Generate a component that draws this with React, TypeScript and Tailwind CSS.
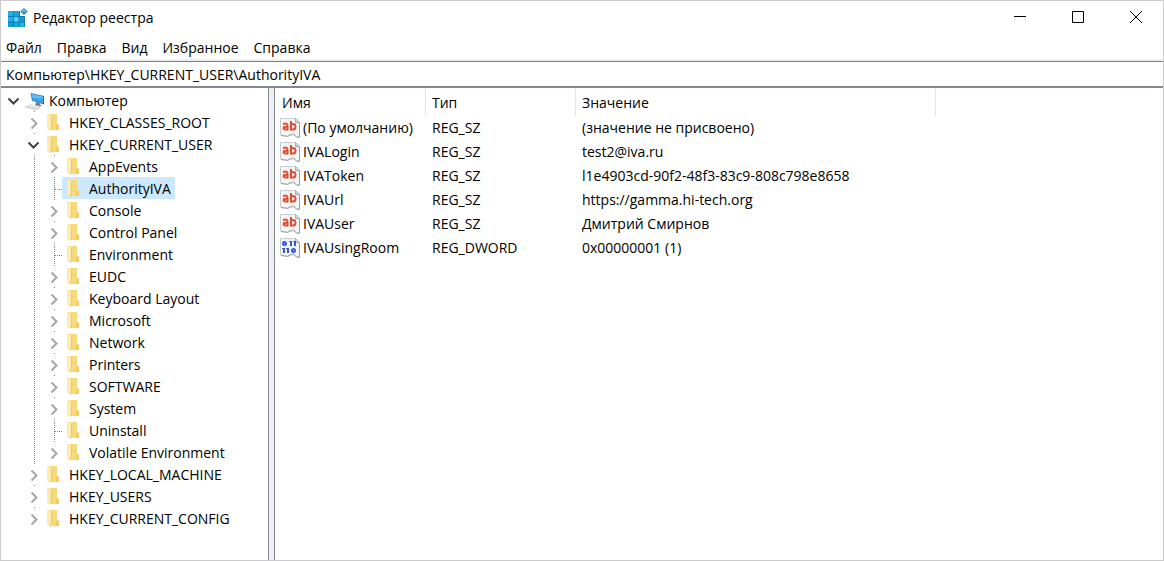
import React, { useState } from 'react';

interface TreeItem {
  name: string;
  level: number;
  state: 'open' | 'closed' | 'leaf';
}

const treeItems: TreeItem[] = [
  { name: 'Компьютер', level: 0, state: 'open' },
  { name: 'HKEY_CLASSES_ROOT', level: 1, state: 'closed' },
  { name: 'HKEY_CURRENT_USER', level: 1, state: 'open' },
  { name: 'AppEvents', level: 2, state: 'closed' },
  { name: 'AuthorityIVA', level: 2, state: 'leaf' },
  { name: 'Console', level: 2, state: 'closed' },
  { name: 'Control Panel', level: 2, state: 'closed' },
  { name: 'Environment', level: 2, state: 'leaf' },
  { name: 'EUDC', level: 2, state: 'closed' },
  { name: 'Keyboard Layout', level: 2, state: 'closed' },
  { name: 'Microsoft', level: 2, state: 'closed' },
  { name: 'Network', level: 2, state: 'closed' },
  { name: 'Printers', level: 2, state: 'closed' },
  { name: 'SOFTWARE', level: 2, state: 'closed' },
  { name: 'System', level: 2, state: 'closed' },
  { name: 'Uninstall', level: 2, state: 'leaf' },
  { name: 'Volatile Environment', level: 2, state: 'closed' },
  { name: 'HKEY_LOCAL_MACHINE', level: 1, state: 'closed' },
  { name: 'HKEY_USERS', level: 1, state: 'closed' },
  { name: 'HKEY_CURRENT_CONFIG', level: 1, state: 'closed' },
];

const values = [
  { name: '(По умолчанию)', type: 'REG_SZ', value: '(значение не присвоено)' },
  { name: 'IVALogin', type: 'REG_SZ', value: 'test2@iva.ru' },
  { name: 'IVAToken', type: 'REG_SZ', value: 'l1e4903cd-90f2-48f3-83c9-808c798e8658' },
  { name: 'IVAUrl', type: 'REG_SZ', value: 'https://gamma.hi-tech.org' },
  { name: 'IVAUser', type: 'REG_SZ', value: 'Дмитрий Смирнов' },
  { name: 'IVAUsingRoom', type: 'REG_DWORD', value: '0x00000001 (1)' },
];

const menuItems = ['Файл', 'Правка', 'Вид', 'Избранное', 'Справка'];

const AppIcon = () => (
  <svg className="h-5 w-5 shrink-0" viewBox="0 0 20 20" aria-hidden="true">
    <path d="M0 3h12l5 4v12H0z" fill="#0d7fb8" />
    <path d="M0 3h5v5H0zM0 9h5v4.500H0z" fill="#22b2ea" />
    <path d="M6 3h5v5H6zM6 14.500h4.500V19H6z" fill="#1ba4dd" />
    <path d="M6 9h4.500v4.500H6z" fill="#5fcdf5" />
    <path d="M0 14.500h5V19H0zM11.500 9H16v4.500h-4.500z" fill="#159bd3" />
    <path d="M11.500 14.500H16V19h-4.500z" fill="#22b2ea" />
    <path d="M12 2h8v6h-8z" fill="#fff" />
    <path d="M16 0l3.700 3.500L16 7l-3.700-3.500z" fill="#2f86b0" />
    <path d="M16 .8l2.700 2.500L16 4.600l-2.700-1.300z" fill="#62b7da" />
  </svg>
);

const ComputerIcon = () => (
  <svg className="h-5 w-5 shrink-0" viewBox="0 0 20 20" aria-hidden="true">
    <path d="M6.500 3L20 6v8.500L8 10.500z" fill="#2672ab" />
    <path d="M7.500 4L19 6.500v6.700L8.700 9.700z" fill="#3aa6f2" />
    <path d="M7.500 4L19 6.500v2L8 7.500z" fill="#63bdf8" />
    <path d="M12 12l4 1.300v1.500l2 .7-2 1-5-1.500z" fill="#76838b" />
    <path d="M1 16.500l5-2.500 10 3-4 2.200z" fill="#dfe3e6" />
    <path d="M1 16.500l11 2.700 4-2.200v.8L12 20 1 17.300z" fill="#aeb4b9" />
  </svg>
);

const FolderIcon = () => (
  <svg className="h-5 w-5 shrink-0" viewBox="0 0 20 20" aria-hidden="true">
    <path d="M4 2h9v10l2 1v5H5z" fill="#f8d979" />
    <path d="M13 12l2 1v5h-3v-5z" fill="#f2cc66" />
    <path d="M3 2h1l4 2v11l-2 3.500L3 17z" fill="#fdebb0" />
    <path d="M7.500 4v11l-1.500 3.500" fill="none" stroke="#eec968" />
  </svg>
);

const ValueIcon = ({ binary }: { binary: boolean }) => (
  <svg className="h-5 w-5 shrink-0" viewBox="0 0 20 20" aria-hidden="true">
    <path
      d="M.5.500h15l4 4v14.500l-3-.5-3-2.500-3 .5-3 1.500-3-.5L.500 17z"
      fill="#f4f5f6"
      stroke="#c9cccf"
    />
    <path d="M15.500.500v4h4z" fill="#d9dcde" stroke="#a9adb1" />
    <path d="M1 17.500l3.500.5 3 .5 3-1.500 3-.5 3 2.500 3 .5V5" fill="none" stroke="#9a9ea2" />
    {binary ? (
      <g fill="none" stroke="#3858dc" strokeWidth="2">
        <rect x="3" y="4" width="3" height="3" rx="1.500" />
        <path d="M11 3v5M15 3v5M4 10v5M8 10v5" />
        <rect x="12" y="11" width="3" height="3" rx="1.500" />
        <path d="M9 3.500h1M13 3.500h1M2 10.500h1M6 10.500h1" strokeWidth="1" />
      </g>
    ) : (
      <g fill="none" stroke="#dc5034" strokeWidth="2">
        <path d="M3 6q4.500-1.200 4.500 1.300V12.500M7.500 8.800H5.500q-2 0-2 1.300t2 1.400 2-1.400" />
        <path d="M11 3v9.500M11 8q0-2 2.200-2t2.300 2.700-2.300 2.800-2.200-2" />
      </g>
    )}
  </svg>
);

// Dotted guide line passing by a nested row
const Guide = () => (
  <svg className="h-[22px] w-5 shrink-0" viewBox="0 0 20 22" aria-hidden="true">
    <path d="M10.500 0v22" stroke="#808080" strokeDasharray="1 1" />
  </svg>
);

const Branch = ({ item }: { item: TreeItem }) => (
  <svg className="h-[22px] w-[18px] shrink-0" viewBox="0 0 18 22" aria-hidden="true">
    {item.state === 'leaf' && (
      <path d="M10.500 0v22M11 12.500h7" stroke="#808080" strokeDasharray="1 1" />
    )}
    {item.state !== 'leaf' && item.level > 0 && <path d="M10.500 0v1" stroke="#808080" />}
    {item.state === 'closed' && (
      <path d="M7.500 7.500l5 5-5 5" fill="none" stroke="#a6a6a6" strokeWidth="2" />
    )}
    {item.state === 'open' && (
      <path d="M4.500 9.500l5 5 5-5" fill="none" stroke="#404040" strokeWidth="2" />
    )}
  </svg>
);

interface TreeRowProps {
  item: TreeItem;
  selected: boolean;
  onSelect: () => void;
}

const TreeRow: React.FC<TreeRowProps> = ({ item, selected, onSelect }) => (
  <li className="flex h-[22px]">
    {item.level > 0 && <span className="w-5 shrink-0" />}
    {item.level > 1 && <Guide />}
    <Branch item={item} />
    <button
      type="button"
      onClick={onSelect}
      className={`flex items-center gap-[5px] whitespace-nowrap pl-0.5 pr-1 ${selected ? 'bg-[#cce8ff]' : ''}`}
    >
      {item.level === 0 ? <ComputerIcon /> : <FolderIcon />}
      <span className="pt-0.5">{item.name}</span>
    </button>
  </li>
);

const WindowControls = () => (
  <div className="flex gap-1">
    <button type="button" aria-label="Свернуть" className="flex h-8 w-[54px] items-center justify-center">
      <svg className="h-3 w-3" viewBox="0 0 12 12">
        <path d="M0 5.500h12" stroke="#000" />
      </svg>
    </button>
    <button type="button" aria-label="Развернуть" className="flex h-8 w-[54px] items-center justify-center">
      <svg className="h-3 w-3" viewBox="0 0 12 12">
        <path d="M.5.500h11v11H.500z" fill="none" stroke="#000" />
      </svg>
    </button>
    <button type="button" aria-label="Закрыть" className="flex h-8 w-[54px] items-center justify-center">
      <svg className="h-3 w-3" viewBox="0 0 12 12">
        <path d="M0 0l12 12M12 0L0 12" stroke="#000" />
      </svg>
    </button>
  </div>
);

const App = () => {
  const [selected, setSelected] = useState('AuthorityIVA');
  const [address, setAddress] = useState('Компьютер\\HKEY_CURRENT_USER\\AuthorityIVA');

  return (
    <div className="flex min-h-screen flex-col border border-[#cccccc] bg-white font-['Open_Sans','Noto_Sans',sans-serif] text-sm leading-5 text-black">
      <header className="flex h-9 items-start justify-between">
        <div className="flex h-[34px] items-center gap-[5px] pl-[7px]">
          <AppIcon />
          <h1>Редактор реестра</h1>
        </div>
        <WindowControls />
      </header>

      <nav className="flex h-6 items-center gap-[15px] border-b-2 border-[#f0f0f0] pl-[5px]">
        {menuItems.map(item => (
          <button key={item} type="button">{item}</button>
        ))}
      </nav>

      <input
        type="text"
        aria-label="Адрес"
        value={address}
        onChange={e => setAddress(e.target.value)}
        className="h-[25px] w-full border-t border-[#7a7a80] px-[5px] outline-none"
      />

      <main className="flex grow border-t-2 border-[#828790] bg-[#f0f0f0]">
        <ul className="w-[268px] shrink-0 border-r border-[#828790] bg-white pl-[3px] pt-px">
          {treeItems.map(item => (
            <TreeRow
              key={item.name}
              item={item}
              selected={item.name === selected}
              onSelect={() => setSelected(item.name)}
            />
          ))}
        </ul>

        <section className="ml-[5px] grow border-l border-[#828790] bg-white">
          <table className="w-full table-fixed border-separate border-spacing-0 text-left">
            <thead>
              <tr className="h-7">
                <th className="w-[151px] border-r border-[#e5e5e5] pl-[7px] pt-0.5 font-normal">Имя</th>
                <th className="w-[150px] border-r border-[#e5e5e5] pl-1.5 pt-0.5 font-normal">Тип</th>
                <th className="w-[360px] border-r border-[#e5e5e5] pl-1.5 pt-0.5 font-normal">Значение</th>
                <td />
              </tr>
            </thead>
            <tbody>
              {values.map(row => (
                <tr key={row.name} className="h-6 whitespace-nowrap">
                  <td className="pl-[5px]">
                    <div className="flex items-center gap-[3px]">
                      <ValueIcon binary={row.type === 'REG_DWORD'} />
                      {row.name}
                    </div>
                  </td>
                  <td className="pl-1.5">{row.type}</td>
                  <td className="pl-1.5">{row.value}</td>
                  <td />
                </tr>
              ))}
            </tbody>
          </table>
        </section>
      </main>
    </div>
  );
};

export default App;
